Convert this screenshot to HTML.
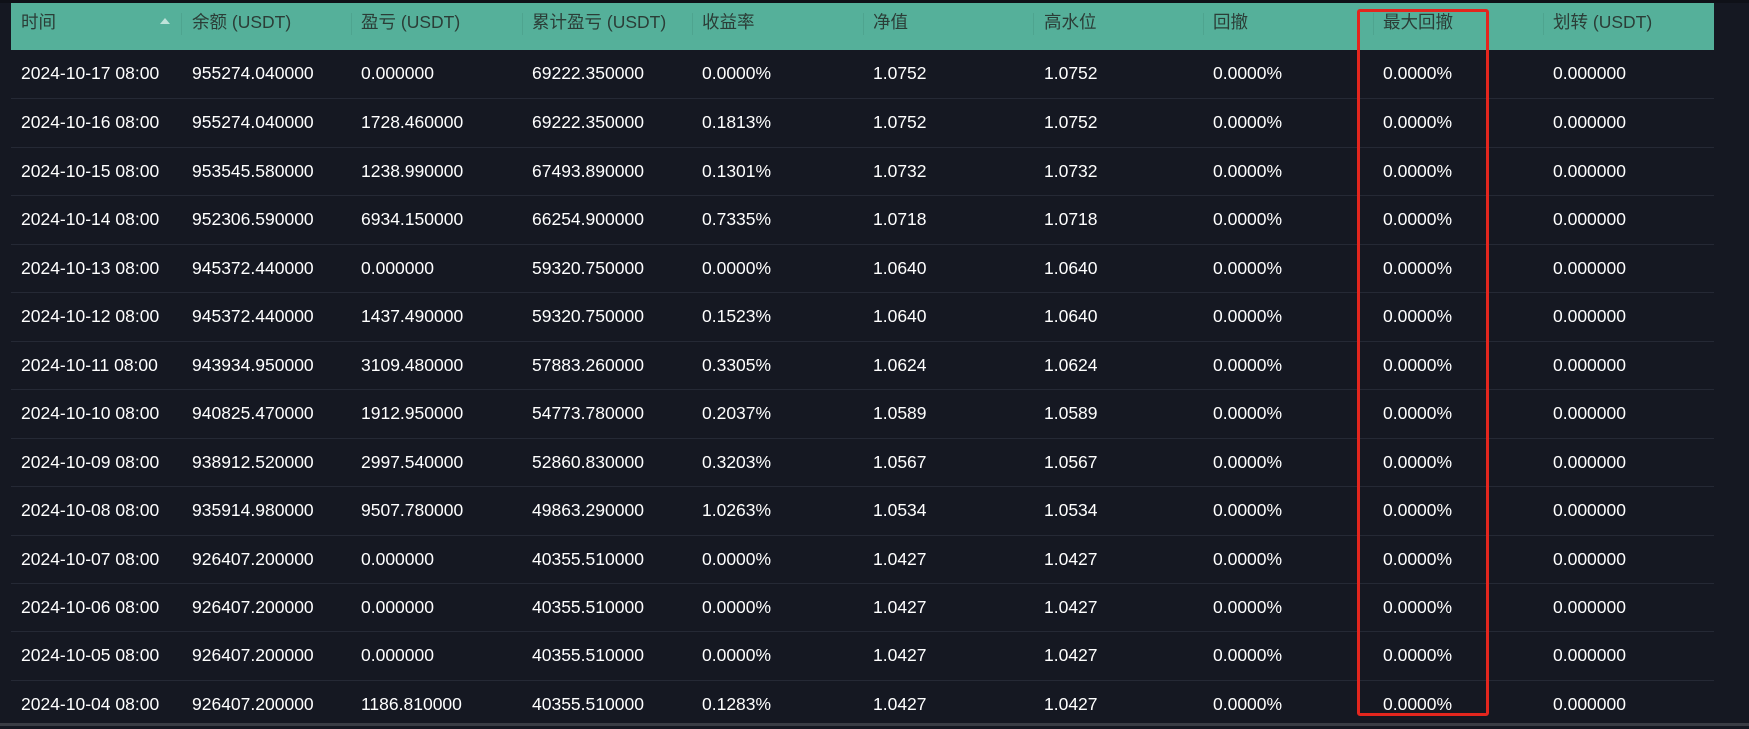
<!DOCTYPE html>
<html><head><meta charset="utf-8"><style>
html,body{margin:0;padding:0;}
body{width:1749px;height:726px;background:#151822;position:relative;overflow:hidden;font-family:"Liberation Sans","Noto Sans CJK SC",sans-serif;}
.top{position:absolute;left:0;top:0;width:1749px;height:3px;background:#0f1118;}
.bot{position:absolute;left:0;top:723px;width:1749px;height:3px;background:#3a3d45;}
.hdr{position:absolute;left:11px;top:3px;width:1703px;height:47px;background:#55b09a;}
.c{position:absolute;white-space:nowrap;font-size:17.5px;}
.h{color:#2b3d37;top:6px;}
.row{position:absolute;left:11px;width:1703px;height:48px;border-top:1px solid #252935;}
.row .c{color:#fff;top:13px;}
.div{position:absolute;top:10px;width:1px;height:22px;background:#4ea48f;}
.box{position:absolute;left:1357px;top:9px;width:126px;height:701px;border:3px solid #e3261e;border-radius:3px;}
</style></head><body>
<div class="top"></div>
<div class="hdr">
<span class="c h" style="left:10px">时间</span>
<span style="position:absolute;left:149px;top:15px;width:0;height:0;border-left:5px solid transparent;border-right:5px solid transparent;border-bottom:6px solid #bfe3da"></span>
<span class="c h" style="left:181px">余额 (USDT)</span>
<span class="c h" style="left:350px">盈亏 (USDT)</span>
<span class="c h" style="left:521px">累计盈亏 (USDT)</span>
<span class="c h" style="left:691px">收益率</span>
<span class="c h" style="left:862px">净值</span>
<span class="c h" style="left:1033px">高水位</span>
<span class="c h" style="left:1202px">回撤</span>
<span class="c h" style="left:1372px">最大回撤</span>
<span class="c h" style="left:1542px">划转 (USDT)</span>
<div class="div" style="left:170px"></div><div class="div" style="left:340px"></div><div class="div" style="left:511px"></div><div class="div" style="left:681px"></div><div class="div" style="left:852px"></div><div class="div" style="left:1022px"></div><div class="div" style="left:1192px"></div><div class="div" style="left:1362px"></div><div class="div" style="left:1532px"></div>
</div>
<div id="rows"></div>
<div class="bot"></div>
<div class="box"></div>
<script>
var d=[
["2024-10-17 08:00","955274.040000","0.000000","69222.350000","0.0000%","1.0752","1.0752"],
["2024-10-16 08:00","955274.040000","1728.460000","69222.350000","0.1813%","1.0752","1.0752"],
["2024-10-15 08:00","953545.580000","1238.990000","67493.890000","0.1301%","1.0732","1.0732"],
["2024-10-14 08:00","952306.590000","6934.150000","66254.900000","0.7335%","1.0718","1.0718"],
["2024-10-13 08:00","945372.440000","0.000000","59320.750000","0.0000%","1.0640","1.0640"],
["2024-10-12 08:00","945372.440000","1437.490000","59320.750000","0.1523%","1.0640","1.0640"],
["2024-10-11 08:00","943934.950000","3109.480000","57883.260000","0.3305%","1.0624","1.0624"],
["2024-10-10 08:00","940825.470000","1912.950000","54773.780000","0.2037%","1.0589","1.0589"],
["2024-10-09 08:00","938912.520000","2997.540000","52860.830000","0.3203%","1.0567","1.0567"],
["2024-10-08 08:00","935914.980000","9507.780000","49863.290000","1.0263%","1.0534","1.0534"],
["2024-10-07 08:00","926407.200000","0.000000","40355.510000","0.0000%","1.0427","1.0427"],
["2024-10-06 08:00","926407.200000","0.000000","40355.510000","0.0000%","1.0427","1.0427"],
["2024-10-05 08:00","926407.200000","0.000000","40355.510000","0.0000%","1.0427","1.0427"],
["2024-10-04 08:00","926407.200000","1186.810000","40355.510000","0.1283%","1.0427","1.0427"]];
var xs=[10,181,350,521,691,862,1033,1202,1372,1542],h="";
d.forEach(function(r,i){var v=r.concat(["0.0000%","0.0000%","0.000000"]);
h+='<div class="row" style="top:'+(50+i*48.45)+'px;'+(i==0?'border-top:none':'')+'">';
v.forEach(function(t,j){h+='<span class="c" style="left:'+xs[j]+'px">'+t+'</span>';});h+='</div>';});
document.getElementById('rows').innerHTML=h;
</script>
</body></html>
